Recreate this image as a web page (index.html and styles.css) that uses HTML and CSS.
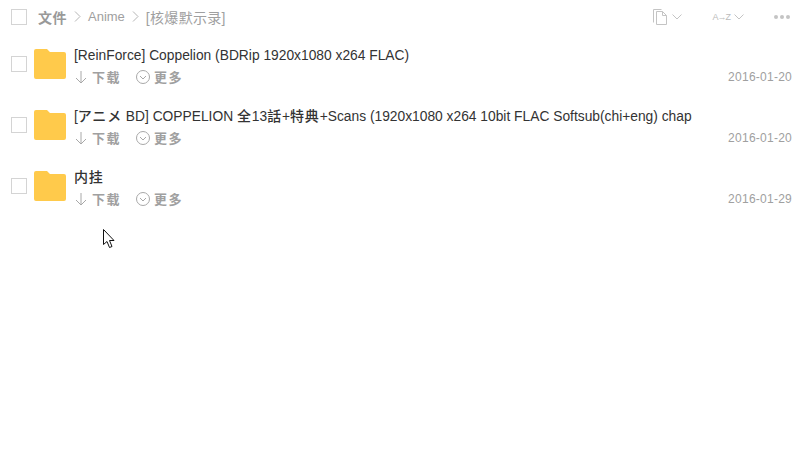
FILE: index.html
```html
<!DOCTYPE html>
<html>

<head>
    <title>Anime</title>
    <meta charset="utf-8" />
    <link rel="stylesheet" href="styles.css">
</head>

<body>
    <div class="page">
        <div class="header">
            <span class="check"></span>
            <div class="crumbs">
                <span class="crumb-root">文件</span>
                <svg class="crumb-sep" width="7" height="11" viewBox="0 0 7 11"><path d="M1 .5l5 5-5 5" fill="none" stroke="#b5b5b5"/></svg>
                <span class="crumb-dir">Anime</span>
                <svg class="crumb-sep" width="7" height="11" viewBox="0 0 7 11"><path d="M1 .5l5 5-5 5" fill="none" stroke="#b5b5b5"/></svg>
                <span class="crumb-last">[核爆默示录]</span>
            </div>
            <div class="tools">
                <svg class="tool-doc" width="14" height="16" viewBox="0 0 14 16"><path d="M.5 13.500V.5h8M3.500 15.500V2.500h6l4 4v9zM9.500 2.500v4h4" fill="none" stroke="#c4c4c4"/></svg>
                <svg class="tool-arrow" width="10" height="6" viewBox="0 0 10 6"><path d="M.5.500l4.500 4.500 4.500-4.500" fill="none" stroke="#c4c4c4"/></svg>
                <span class="sort-label">A→Z</span>
                <svg class="tool-arrow" width="10" height="6" viewBox="0 0 10 6"><path d="M.5.500l4.500 4.500 4.500-4.500" fill="none" stroke="#c4c4c4"/></svg>
                <span class="dots"><i></i><i></i><i></i></span>
            </div>
        </div>

        <div class="row">
            <span class="check"></span>
            <svg class="folder" width="32" height="30" viewBox="0 0 32 30"><path d="M2 0h11l3 3h14a2 2 0 0 1 2 2v23a2 2 0 0 1-2 2H2a2 2 0 0 1-2-2V2a2 2 0 0 1 2-2z" fill="#ffca4b"/></svg>
            <div class="info">
                <div class="name">[ReinForce] Coppelion (BDRip 1920x1080 x264 FLAC)</div>
                <div class="meta">
                    <span class="act act-down"><svg width="12" height="14" viewBox="0 0 12 14"><path d="M6 1v12M1 8l5 5 5-5" fill="none" stroke="#a8a8a8"/></svg>下载</span>
                    <span class="act"><svg width="14" height="14" viewBox="0 0 14 14"><circle cx="7" cy="7" r="6.500" fill="none" stroke="#a8a8a8"/><path d="M4 6l3 3 3-3" fill="none" stroke="#a8a8a8"/></svg>更多</span>
                    <span class="date">2016-01-20</span>
                </div>
            </div>
        </div>

        <div class="row">
            <span class="check"></span>
            <svg class="folder" width="32" height="30" viewBox="0 0 32 30"><path d="M2 0h11l3 3h14a2 2 0 0 1 2 2v23a2 2 0 0 1-2 2H2a2 2 0 0 1-2-2V2a2 2 0 0 1 2-2z" fill="#ffca4b"/></svg>
            <div class="info">
                <div class="name">[<span class="cjk">アニメ</span> BD] COPPELION <span class="cjk">全</span>13<span class="cjk">話</span>+<span class="cjk">特典</span>+Scans (1920x1080 x264 10bit FLAC Softsub(chi+eng) chap</div>
                <div class="meta">
                    <span class="act act-down"><svg width="12" height="14" viewBox="0 0 12 14"><path d="M6 1v12M1 8l5 5 5-5" fill="none" stroke="#a8a8a8"/></svg>下载</span>
                    <span class="act"><svg width="14" height="14" viewBox="0 0 14 14"><circle cx="7" cy="7" r="6.500" fill="none" stroke="#a8a8a8"/><path d="M4 6l3 3 3-3" fill="none" stroke="#a8a8a8"/></svg>更多</span>
                    <span class="date">2016-01-20</span>
                </div>
            </div>
        </div>

        <div class="row">
            <span class="check"></span>
            <svg class="folder" width="32" height="30" viewBox="0 0 32 30"><path d="M2 0h11l3 3h14a2 2 0 0 1 2 2v23a2 2 0 0 1-2 2H2a2 2 0 0 1-2-2V2a2 2 0 0 1 2-2z" fill="#ffca4b"/></svg>
            <div class="info">
                <div class="name"><span class="cjk">内挂</span></div>
                <div class="meta">
                    <span class="act act-down"><svg width="12" height="14" viewBox="0 0 12 14"><path d="M6 1v12M1 8l5 5 5-5" fill="none" stroke="#a8a8a8"/></svg>下载</span>
                    <span class="act"><svg width="14" height="14" viewBox="0 0 14 14"><circle cx="7" cy="7" r="6.500" fill="none" stroke="#a8a8a8"/><path d="M4 6l3 3 3-3" fill="none" stroke="#a8a8a8"/></svg>更多</span>
                    <span class="date">2016-01-29</span>
                </div>
            </div>
        </div>

        <svg class="cursor" width="13" height="20" viewBox="0 0 13 20"><path d="M.5.500v15l3.500-3 2.500 6 2.500-1-2.500-6h4.500z" fill="#fff" stroke="#111"/></svg>
    </div>
</body>

</html>
```

FILE: styles.css
```css
html,
body {
    width: 100%;
    height: 100%;
    margin: 0;
}

body {
    font-family: "Liberation Sans", "Noto Sans CJK SC", sans-serif;
    background-color: #fff;
    overflow: hidden;
}

.page {
    position: relative;
    height: 100%;
    padding: 0 3px 0 11px;
    box-sizing: border-box;
}

.check {
    width: 16px;
    height: 16px;
    border: 1px solid #d4d4d4;
    box-sizing: border-box;
    flex-shrink: 0;
}

.header {
    height: 33px;
    display: flex;
    align-items: center;
}

.crumbs {
    margin-left: 11px;
    display: flex;
    align-items: center;
    gap: 7px;
    font-size: 14px;
    color: #a0a0a0;
}

.crumb-root {
    font-weight: 700;
    color: #999;
    letter-spacing: .5px;
}

.crumb-dir {
    font-size: 13px;
}

.crumb-last {
    letter-spacing: .3px;
}

.tools {
    margin-left: auto;
    display: flex;
    align-items: center;
}

.tool-arrow {
    margin-left: 5px;
}

.sort-label {
    margin-left: 30px;
    font-size: 9px;
    letter-spacing: -1px;
    color: #bbb;
}

.sort-label + .tool-arrow {
    margin-left: 4px;
}

.dots {
    margin-left: 30px;
    margin-right: 2px;
    display: flex;
    gap: 2px;
}

.dots i {
    width: 4px;
    height: 4px;
    border-radius: 50%;
    background-color: #c4c4c4;
}

.row {
    height: 61px;
    padding-top: 1px;
    box-sizing: border-box;
    display: flex;
    align-items: center;
}

.folder {
    margin-left: 7px;
    flex-shrink: 0;
}

.info {
    margin-left: 8px;
    padding-top: 3px;
    flex: 1;
}

.name {
    height: 20px;
    line-height: 20px;
    font-size: 13.800px;
    color: #333;
    white-space: nowrap;
}

.cjk {
    font-size: 14px;
    line-height: 1;
    font-weight: 500;
    letter-spacing: .8px;
}

.meta {
    margin-top: 2px;
    height: 18px;
    display: flex;
    align-items: center;
    font-size: 13px;
    font-weight: 700;
    color: #a0a0a0;
}

.act {
    display: flex;
    align-items: center;
    gap: 4px;
    letter-spacing: 1.500px;
}

.act-down {
    width: 62px;
    padding-left: 1px;
    box-sizing: border-box;
    gap: 5px;
}

.date {
    margin-left: auto;
    font-size: 12px;
    font-weight: 400;
    letter-spacing: .25px;
    color: #a0a0a0;
}

.cursor {
    position: absolute;
    left: 103px;
    top: 229px;
}
```
